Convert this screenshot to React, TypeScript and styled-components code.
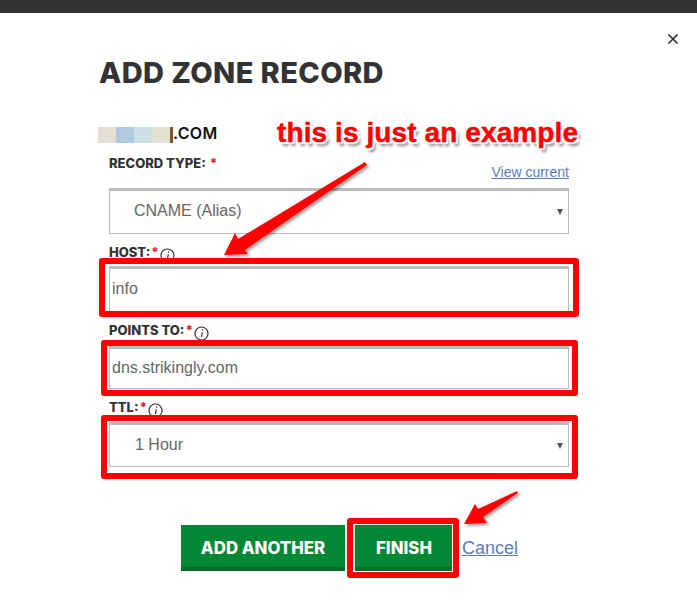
import React from "react";
import { createGlobalStyle, styled } from "styled-components";

const GlobalStyle = createGlobalStyle`
  html, body {
    margin: 0;
    padding: 0;
    background: #fff;
  }
`;

// Modal page
const Page = styled.div`
  position: relative;
  width: 697px;
  height: 606px;
  overflow: hidden;
  background: #fff;
`;

const TopBar = styled.div`
  height: 13px;
  background: #333;
`;

const Modal = styled.div`
  padding: 42px 0 0 99px;
  width: 470px;
`;

const CloseButton = styled.button`
  position: absolute;
  top: 33px;
  left: 667px;
  width: 12px;
  height: 12px;
  padding: 0;
  border: 0;
  background: none;
  color: #333;
  display: flex;
`;

const Title = styled.h1`
  margin: 0;
  font-family: Inter, sans-serif;
  font-size: 29px;
  line-height: 36px;
  font-weight: 800;
  color: #333;
  letter-spacing: 0.4px;
`;

const DomainRow = styled.div`
  margin: 32px 0 0 -1px;
  height: 20px;
  display: flex;
  align-items: center;
`;

const Blur = styled.span<{ $color: string; $width: number }>`
  width: ${(p) => p.$width}px;
  height: 16px;
  margin-top: 3px;
  background: ${(p) => p.$color};
`;

const DomainText = styled.span`
  font-family: Inter, sans-serif;
  font-size: 16px;
  font-weight: 600;
  color: #111;
  letter-spacing: 0.3px;
`;

const Form = styled.form`
  margin: 12px 0 0 10px;
  width: 460px;
`;

const LabelRow = styled.div<{ $height: number }>`
  height: ${(p) => p.$height}px;
  display: flex;
  align-items: flex-start;
  justify-content: space-between;
`;

const Label = styled.label`
  display: flex;
  align-items: center;
  gap: 1px;
  height: 16px;
  font-family: Inter, sans-serif;
  font-size: 13px;
  font-weight: 800;
  color: #333;
`;

const Star = styled.span<{ $gap?: number }>`
  margin-left: ${(p) => p.$gap ?? 0}px;
  color: #d9262b;
`;

const InfoIcon = styled.svg`
  width: 15px;
  height: 15px;
  margin: 6px 0 0 0;
  color: #333;
`;

const Link = styled.a`
  font-family: "Liberation Sans", sans-serif;
  color: #5b7cb8;
  text-decoration: underline;
`;

const ViewCurrent = styled(Link)`
  margin-top: 9px;
  font-size: 14px;
  line-height: 16px;
`;

const Field = styled.div<{ $height: number; $indent: number }>`
  box-sizing: border-box;
  height: ${(p) => p.$height}px;
  padding: 0 0 2px ${(p) => p.$indent}px;
  margin-bottom: 10px;
  display: flex;
  align-items: center;
  justify-content: space-between;
  border: 1px solid #bbb;
  border-top-width: 3px;
  font-family: "Liberation Sans", sans-serif;
  font-size: 16px;
  color: #666;
`;

const Caret = styled.span`
  width: 0;
  height: 0;
  margin: 2px 5px 0 0;
  border-left: 3px solid transparent;
  border-right: 3px solid transparent;
  border-top: 6px solid #555;
`;

const Actions = styled.div`
  margin: 58px 0 0 82px;
  display: flex;
  align-items: center;
`;

const Button = styled.button<{ $width: number; $outlined?: boolean }>`
  width: ${(p) => p.$width}px;
  height: 46px;
  margin-right: ${(p) => (p.$outlined ? 9 : 10)}px;
  padding: 3px 0 0;
  border: 0;
  border-bottom: 4px solid #036b2a;
  background: #028834;
  color: #fff;
  font-family: Inter, sans-serif;
  font-size: 16.8px;
  font-weight: 800;
`;

const Cancel = styled(Link)`
  font-size: 18px;
`;

// Annotations drawn over the form
const RedBox = styled.div<{ $l: number; $t: number; $w: number; $h: number }>`
  position: absolute;
  box-sizing: border-box;
  left: ${(p) => p.$l}px;
  top: ${(p) => p.$t}px;
  width: ${(p) => p.$w}px;
  height: ${(p) => p.$h}px;
  border: 6px solid #ff0000;
  border-radius: 3px;
`;

const FinishOutline = styled.div`
  position: absolute;
  box-sizing: border-box;
  left: 353px;
  top: 524px;
  width: 100px;
  height: 48px;
  border: 1px solid #fff;
`;

const Note = styled.div`
  position: absolute;
  left: 277px;
  top: 117px;
  font-family: "Liberation Sans", sans-serif;
  font-size: 28px;
  line-height: 32px;
  font-weight: 700;
  color: #ff0000;
  white-space: nowrap;
  letter-spacing: 0.1px;
  -webkit-text-stroke: 0.5px #ff0000;
  text-shadow:
    -2px -2px 1px #fff, 2px -2px 1px #fff, -2px 2px 1px #fff, 2px 2px 1px #fff,
    0 -2px 1px #fff, 0 2px 1px #fff, -2px 0 1px #fff, 2px 0 1px #fff,
    3px 4px 3px rgba(0, 0, 0, 0.5);
`;

const ArrowLayer = styled.svg`
  position: absolute;
  left: 0;
  top: 0;
  pointer-events: none;
`;

const Info = () => (
  <InfoIcon viewBox="0 0 15 15">
    <circle cx="7.5" cy="7.5" r="6.5" fill="none" stroke="currentColor" strokeWidth="1.2" />
    <path d="M7.9 3.4h1.3v1.3H7.9zM7.7 6.2h1.2L8 11h-1.2z" fill="currentColor" />
  </InfoIcon>
);

const App: React.FC = () => {
  return (
    <Page>
      <GlobalStyle />
      <TopBar />
      <CloseButton aria-label="Close">
        <svg width="12" height="12" viewBox="0 0 12 12">
          <path d="M1.5 1.5l9 9M10.5 1.5l-9 9" stroke="currentColor" strokeWidth="1.7" />
        </svg>
      </CloseButton>
      <Modal>
        <Title>ADD ZONE RECORD</Title>
        <DomainRow>
          <Blur $color="#e4dfd2" $width={18} />
          <Blur $color="#b0cae2" $width={18} />
          <Blur $color="#cbe0e6" $width={18} />
          <Blur $color="#e3e2cf" $width={18} />
          <Blur $color="#8a4f24" $width={3} />
          <DomainText>.COM</DomainText>
        </DomainRow>
        <Form>
          <LabelRow $height={33}>
            <Label>
              RECORD TYPE: <Star $gap={3}>*</Star>
            </Label>
            <ViewCurrent href="#">View current</ViewCurrent>
          </LabelRow>
          <Field $height={46} $indent={24}>
            CNAME (Alias)
            <Caret />
          </Field>
          <LabelRow $height={22}>
            <Label>
              HOST: <Star>*</Star>
              <Info />
            </Label>
          </LabelRow>
          <Field $height={46} $indent={2}>
            info
          </Field>
          <LabelRow $height={24}>
            <Label>
              POINTS TO: <Star>*</Star>
              <Info />
            </Label>
          </LabelRow>
          <Field $height={43} $indent={2}>
            dns.strikingly.com
          </Field>
          <LabelRow $height={23}>
            <Label>
              TTL: <Star>*</Star>
              <Info />
            </Label>
          </LabelRow>
          <Field $height={45} $indent={25}>
            1 Hour
            <Caret />
          </Field>
        </Form>
        <Actions>
          <Button $width={164}>ADD ANOTHER</Button>
          <Button $width={98} $outlined>
            FINISH
          </Button>
          <Cancel href="#">Cancel</Cancel>
        </Actions>
      </Modal>

      <RedBox $l={99} $t={258} $w={480} $h={59} />
      <RedBox $l={101} $t={340} $w={477} $h={56} />
      <RedBox $l={101} $t={415} $w={477} $h={64} />
      <RedBox $l={347} $t={518} $w={112} $h={60} />
      <FinishOutline />
      <Note>this is just an example</Note>

      <ArrowLayer width="697" height="606" viewBox="0 0 697 606">
        <defs>
          <filter id="arrowShadow" x="-20%" y="-20%" width="140%" height="140%">
            <feDropShadow dx="2" dy="2" stdDeviation="1.5" floodColor="#000" floodOpacity="0.4" />
          </filter>
        </defs>
        <polygon
          points="224,255 235,233 238,239 365,162 367,165 245,250 248,254"
          fill="#ff0000"
          filter="url(#arrowShadow)"
        />
        <polygon
          points="464,524 475,504 478,509 517,491 518,493 483,517 487,523"
          fill="#ff0000"
          filter="url(#arrowShadow)"
        />
      </ArrowLayer>
    </Page>
  );
};

export default App;
